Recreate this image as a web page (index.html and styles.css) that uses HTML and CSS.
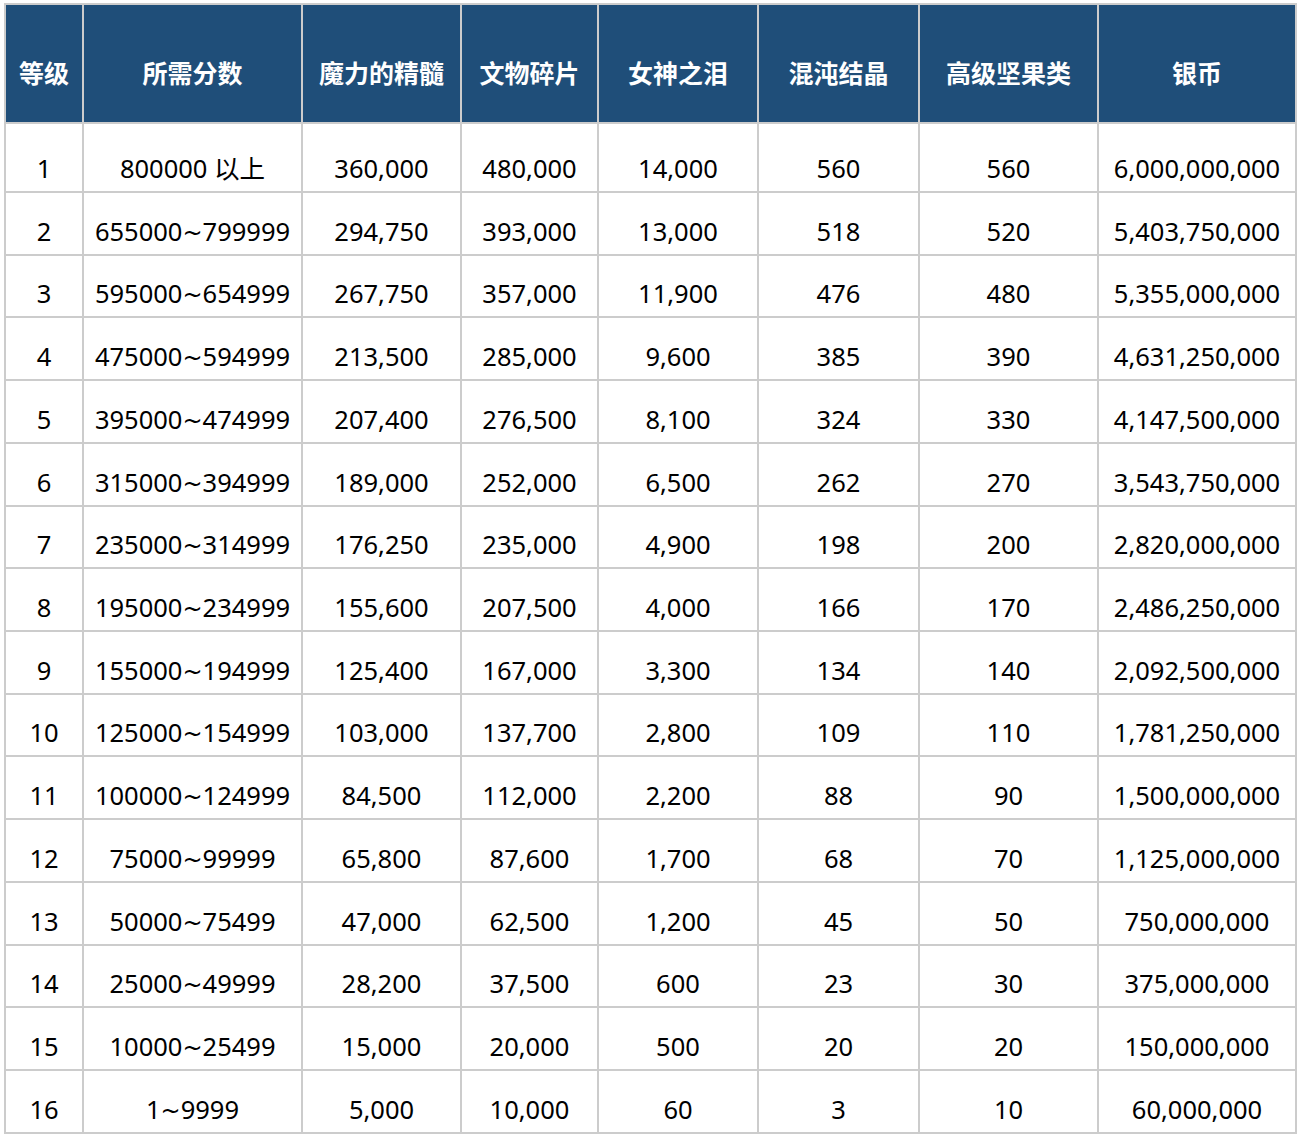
FILE: index.html
```html
<!DOCTYPE html>
<html lang="zh-CN">
<head>
<meta charset="utf-8">
<title>等级奖励</title>
<link rel="stylesheet" href="styles.css">
</head>
<body>
<table class="reward-table">
  <colgroup>
    <col class="c1"><col class="c2"><col class="c3"><col class="c4"><col class="c5"><col class="c6"><col class="c7"><col class="c8">
  </colgroup>
  <thead>
    <tr class="head-row">
      <th>等级</th><th>所需分数</th><th>魔力的精髓</th><th>文物碎片</th><th>女神之泪</th><th>混沌结晶</th><th>高级坚果类</th><th>银币</th>
    </tr>
  </thead>
  <tbody>
    <tr class="first-row"><td>1</td><td>800000 以上</td><td>360,000</td><td>480,000</td><td>14,000</td><td>560</td><td>560</td><td>6,000,000,000</td></tr>
    <tr><td>2</td><td>655000<span class="tilde">~</span>799999</td><td>294,750</td><td>393,000</td><td>13,000</td><td>518</td><td>520</td><td>5,403,750,000</td></tr>
    <tr><td>3</td><td>595000<span class="tilde">~</span>654999</td><td>267,750</td><td>357,000</td><td>11,900</td><td>476</td><td>480</td><td>5,355,000,000</td></tr>
    <tr><td>4</td><td>475000<span class="tilde">~</span>594999</td><td>213,500</td><td>285,000</td><td>9,600</td><td>385</td><td>390</td><td>4,631,250,000</td></tr>
    <tr><td>5</td><td>395000<span class="tilde">~</span>474999</td><td>207,400</td><td>276,500</td><td>8,100</td><td>324</td><td>330</td><td>4,147,500,000</td></tr>
    <tr><td>6</td><td>315000<span class="tilde">~</span>394999</td><td>189,000</td><td>252,000</td><td>6,500</td><td>262</td><td>270</td><td>3,543,750,000</td></tr>
    <tr><td>7</td><td>235000<span class="tilde">~</span>314999</td><td>176,250</td><td>235,000</td><td>4,900</td><td>198</td><td>200</td><td>2,820,000,000</td></tr>
    <tr><td>8</td><td>195000<span class="tilde">~</span>234999</td><td>155,600</td><td>207,500</td><td>4,000</td><td>166</td><td>170</td><td>2,486,250,000</td></tr>
    <tr><td>9</td><td>155000<span class="tilde">~</span>194999</td><td>125,400</td><td>167,000</td><td>3,300</td><td>134</td><td>140</td><td>2,092,500,000</td></tr>
    <tr><td>10</td><td>125000<span class="tilde">~</span>154999</td><td>103,000</td><td>137,700</td><td>2,800</td><td>109</td><td>110</td><td>1,781,250,000</td></tr>
    <tr><td>11</td><td>100000<span class="tilde">~</span>124999</td><td>84,500</td><td>112,000</td><td>2,200</td><td>88</td><td>90</td><td>1,500,000,000</td></tr>
    <tr><td>12</td><td>75000<span class="tilde">~</span>99999</td><td>65,800</td><td>87,600</td><td>1,700</td><td>68</td><td>70</td><td>1,125,000,000</td></tr>
    <tr><td>13</td><td>50000<span class="tilde">~</span>75499</td><td>47,000</td><td>62,500</td><td>1,200</td><td>45</td><td>50</td><td>750,000,000</td></tr>
    <tr><td>14</td><td>25000<span class="tilde">~</span>49999</td><td>28,200</td><td>37,500</td><td>600</td><td>23</td><td>30</td><td>375,000,000</td></tr>
    <tr><td>15</td><td>10000<span class="tilde">~</span>25499</td><td>15,000</td><td>20,000</td><td>500</td><td>20</td><td>20</td><td>150,000,000</td></tr>
    <tr><td>16</td><td>1<span class="tilde">~</span>9999</td><td>5,000</td><td>10,000</td><td>60</td><td>3</td><td>10</td><td>60,000,000</td></tr>
  </tbody>
</table>
</body>
</html>
```

FILE: styles.css
```css
html, body {
  margin: 0;
  padding: 0;
  background: #ffffff;
}

body {
  font-family: "Noto Sans", "Noto Sans CJK SC", sans-serif;
}

.reward-table {
  margin: 3px 0 0 4px;
  border-collapse: collapse;
  table-layout: fixed;
  width: 1293px;
  font-size: 25.5px;
  line-height: 30px;
  color: #000000;
}

.c1 { width: 78px; }
.c2 { width: 219px; }
.c3 { width: 159px; }
.c4 { width: 137px; }
.c5 { width: 160px; }
.c6 { width: 161px; }
.c7 { width: 179px; }
.c8 { width: 198px; }

.reward-table th,
.reward-table td {
  border: 2px solid #cccccc;
  padding: 0 0 8px 0;
  text-align: center;
  vertical-align: bottom;
  white-space: nowrap;
}

.reward-table th {
  background: #1f4e79;
  color: #ffffff;
  font-family: "Noto Sans CJK SC", "Noto Sans", sans-serif;
  font-size: 25px;
  font-weight: 700;
  padding-bottom: 35px;
}

.tilde {
  font-family: "DejaVu Sans", sans-serif;
  font-size: 24px;
  line-height: 0;
}

.head-row { height: 119px; }
.reward-table tbody tr { height: 62.73px; }
.reward-table tbody tr.first-row { height: 69px; }
```
